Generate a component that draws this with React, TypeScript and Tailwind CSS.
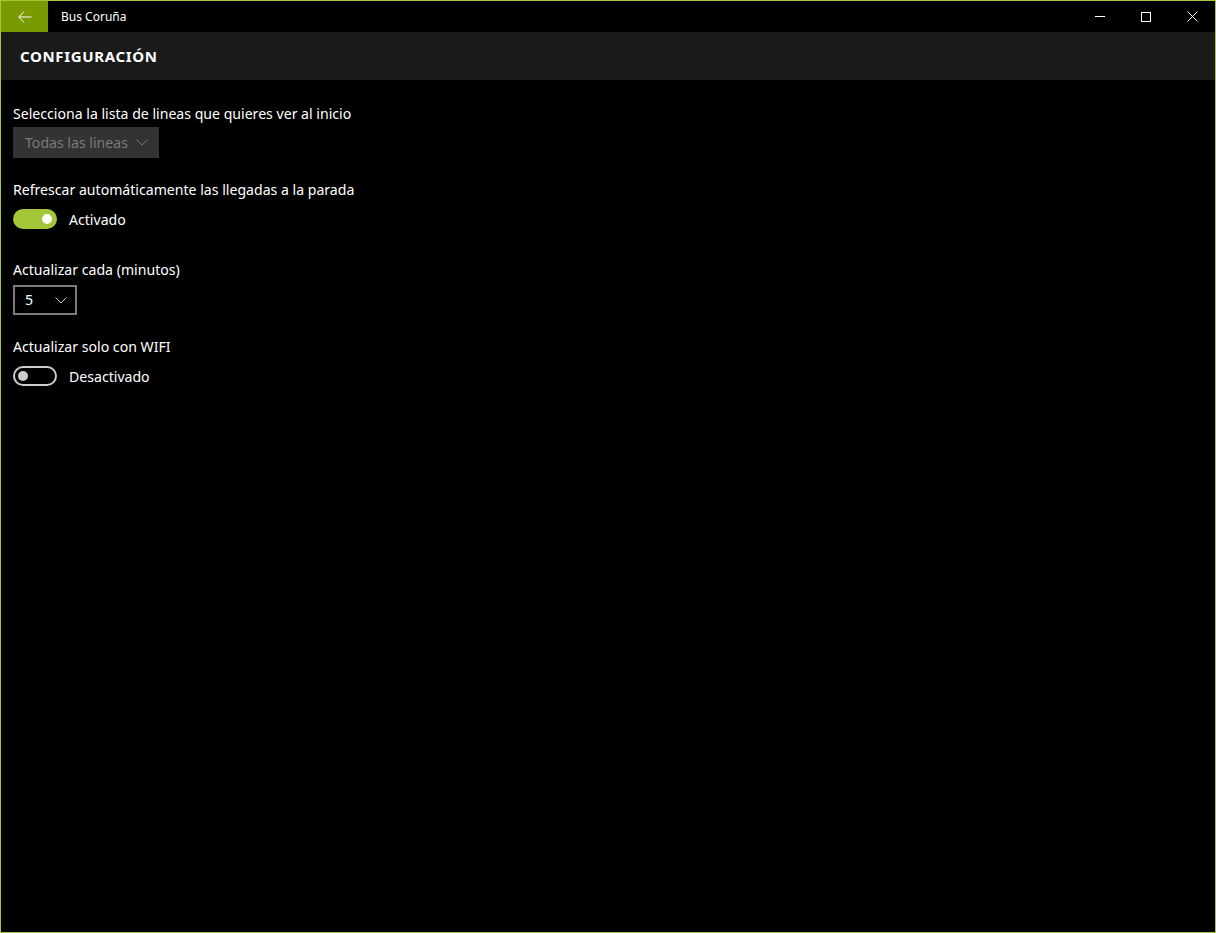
import React from 'react';

const font = { fontFamily: '"Noto Sans", "Segoe UI", Arial, sans-serif' };

function ChevronDown({ color }: { color: string }) {
  return (
    <svg width="12" height="7" viewBox="0 0 12 7" fill="none">
      <path d="M0.5 0.5 L6 6 L11.5 0.5" stroke={color} strokeWidth="1" />
    </svg>
  );
}

function Toggle({ on }: { on: boolean }) {
  if (on) {
    return (
      <div className="flex h-[20px] w-[44px] items-center justify-end rounded-full bg-[#a4c639] pr-[5px]">
        <div className="h-[10px] w-[10px] rounded-full bg-white" />
      </div>
    );
  }
  return (
    <div className="flex h-[20px] w-[44px] items-center rounded-full border-2 border-[#cccccc] pl-[3px]">
      <div className="h-[10px] w-[10px] rounded-full bg-[#cccccc]" />
    </div>
  );
}

export default function App() {
  return (
    <div className="h-[933px] w-[1216px] overflow-hidden border border-[#a4c639] bg-black text-white" style={font}>
      {/* Title bar */}
      <div className="flex h-[31px] items-stretch bg-black">
        <div className="flex w-[47px] items-center justify-center bg-[#7a9a01]">
          <svg width="14" height="12" viewBox="0 0 14 12" fill="none">
            <path d="M6 0.5 L0.8 6 L6 11.5 M0.8 6 H13.5" stroke="white" strokeWidth="1" />
          </svg>
        </div>
        <div className="flex items-center pl-[13px] text-[12px]">Bus Coruña</div>
        <div className="ml-auto flex">
          <div className="flex w-[46px] items-center justify-center">
            <div className="h-px w-[10px] bg-white" />
          </div>
          <div className="flex w-[46px] items-center justify-center">
            <div className="h-[10px] w-[10px] border border-white" />
          </div>
          <div className="flex w-[46px] items-center justify-center">
            <svg width="11" height="11" viewBox="0 0 11 11" fill="none">
              <path d="M0.5 0.5 L10.5 10.5 M10.5 0.5 L0.5 10.5" stroke="white" strokeWidth="1" />
            </svg>
          </div>
        </div>
      </div>

      {/* Page header */}
      <div className="flex h-[48px] items-center bg-[#1a1a1a] pl-[19px]">
        <span className="text-[15px] font-bold tracking-[0.65px]">CONFIGURACIÓN</span>
      </div>

      {/* Settings */}
      <div className="flex flex-col pl-[12px] pt-[23px] text-[14.1px] leading-[22px]">
        <div className="h-[20px]">Selecciona la lista de lineas que quieres ver al inicio</div>
        <div className="mt-[4px] flex h-[31px] w-[146px] items-center justify-between bg-[#333333] pl-[12px] pr-[11px] text-[#7a7a7a]">
          <span>Todas las lineas</span>
          <ChevronDown color="#7a7a7a" />
        </div>

        <div className="mt-[21px] h-[20px]">Refrescar automáticamente las llegadas a la parada</div>
        <div className="mt-[10px] flex h-[20px] items-center">
          <Toggle on />
          <span className="ml-[12px] pt-[1px]">Activado</span>
        </div>

        <div className="mt-[30px] h-[20px]">Actualizar cada (minutos)</div>
        <div className="mt-[6px] flex h-[30px] w-[64px] items-center justify-between border-2 border-[#7a7a7a] pl-[10px] pr-[8px]">
          <span>5</span>
          <ChevronDown color="#cccccc" />
        </div>

        <div className="mt-[21px] h-[20px]">Actualizar solo con WIFI</div>
        <div className="mt-[10px] flex h-[20px] items-center">
          <Toggle on={false} />
          <span className="ml-[12px] pt-[1px]">Desactivado</span>
        </div>
      </div>
    </div>
  );
}
